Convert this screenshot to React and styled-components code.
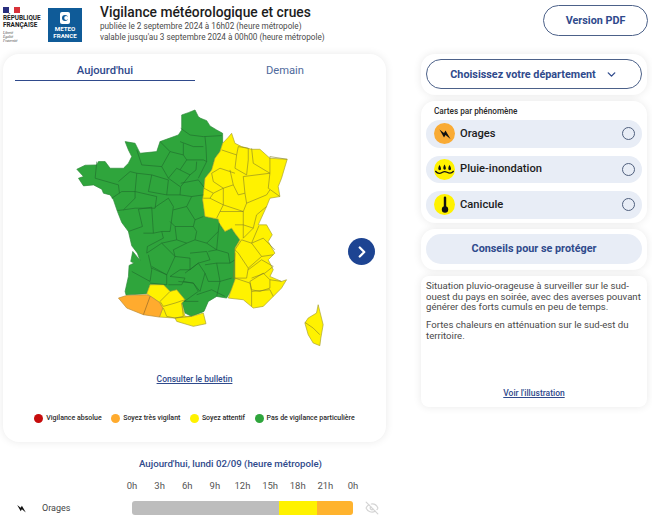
import React from 'react';
import styled, { createGlobalStyle } from 'styled-components';
import { ChevronDown, ChevronRight, EyeOff } from 'lucide-react';

const NAVY = '#2f4a8c';

const GlobalStyle = createGlobalStyle`
  html, body { margin: 0; padding: 0; background: #fff; }
  body { font-family: Roboto, "Liberation Sans", sans-serif; }
`;

const GREEN_OUTLINE = 'M365,45 L385,38 405,30 415,50 422,55 440,62 450,78 470,90 488,100 488,130 480,155 465,175 455,210 435,235 430,290 428,300 435,350 475,358 478,370 495,395 515,385 525,400 540,420 525,445 525,540 515,570 500,595 470,590 445,605 432,635 395,650 375,640 365,605 345,590 330,575 310,555 270,555 260,582 198,586 195,575 205,530 207,497 222,490 212,485 218,455 240,482 232,460 215,438 205,395 185,368 172,335 160,300 150,285 130,280 125,268 100,255 70,258 55,235 70,230 50,208 75,196 110,195 115,185 135,185 150,205 190,205 205,190 215,170 205,150 195,125 225,130 235,150 240,160 290,155 300,125 355,105 365,90 Z';
const YELLOW_OUTLINE = 'M515,100 L525,130 545,140 575,148 600,148 630,175 682,178 665,235 655,260 660,290 630,295 620,320 595,375 620,375 637,405 625,425 645,460 625,480 640,510 630,530 665,545 680,540 665,565 640,590 610,620 580,625 550,600 505,595 525,540 525,445 540,420 525,400 515,385 495,395 478,370 475,358 435,350 428,300 435,235 455,210 465,175 480,155 488,130 505,112 Z';
const SOUTH_OUTLINE = 'M260,582 L270,555 310,555 330,575 350,570 375,600 365,610 375,650 395,650 430,640 438,672 400,680 350,665 345,655 298,652 308,625 298,608 275,592 Z';
const ORANGE_OUTLINE = 'M175,595 L200,587 260,585 275,592 298,608 308,625 298,652 250,645 200,625 Z';
const CORSICA_OUTLINE = 'M775,615 L780,635 790,675 783,715 780,738 760,730 745,705 735,670 745,655 770,640 Z';

const GREEN_LINES = [
  // Nord, Picardie, Ile-de-France
  'M362,85 L390,105 430,110 485,107',
  'M435,110 L438,140 440,185',
  'M360,125 L400,140 430,140',
  'M330,155 L370,165 380,180 430,180 440,185 415,235',
  'M370,130 L370,165',
  'M300,125 L330,155 305,200',
  'M380,180 L360,210 390,225 408,210 410,185',
  'M360,210 L350,205 325,235',
  'M390,225 L362,260 360,285 395,290 430,285',
  'M362,250 L415,240 432,262',
  // Normandie
  'M230,150 L245,195 305,200 325,235',
  // Bretagne, Pays de la Loire
  'M110,185 L105,235 175,255 178,280',
  'M175,245 L210,215 230,220 225,275',
  'M155,295 L185,275 225,275 225,295 190,330 172,332',
  'M230,220 L275,225 265,275',
  'M275,225 L325,240 320,285 265,275',
  'M225,275 L290,290 285,325 225,325 190,330',
  'M235,328 L247,380 205,395',
  'M235,328 L275,322 280,400 250,400',
  'M325,235 L360,260',
  // Centre, Poitou
  'M285,322 L325,295 340,320 330,395 305,395 280,400',
  'M320,285 L360,285',
  'M395,290 L380,320 340,330',
  'M380,320 L405,360 430,350',
  'M330,365 L345,380 400,380 405,360',
  // Limousin, Auvergne
  'M305,395 L310,415 262,440 260,460',
  'M345,380 L350,420 380,430 405,420 410,395 400,380',
  'M405,420 L440,430 475,395 478,370',
  'M440,430 L470,450 475,395',
  'M350,420 L305,430',
  // Sud-ouest
  'M265,465 L275,510 270,545 215,515',
  'M260,460 L305,430 345,470 320,525 275,500',
  'M275,505 L320,525 320,555 270,550',
  'M345,470 L390,475 390,510 360,510 330,530',
  'M330,530 L375,535 365,555 325,555',
  'M345,470 L340,450 380,430',
  'M390,460 L440,455 450,480 415,490 390,510',
  'M375,520 L415,490 435,520 420,575 400,550 370,545',
  'M435,495 L470,490 480,545 445,545 435,520',
  'M445,455 L470,450 505,460 510,490 470,490',
  'M510,490 L525,480',
  'M480,545 L515,535',
  'M355,545 L400,550 415,575 380,600',
  'M410,585 L455,570 495,590',
  'M480,545 L470,590',
  'M380,600 L372,605 415,605',
];

const YELLOW_LINES = [
  'M485,150 L530,165 535,140 565,145 565,180 560,225 525,205 530,165',
  'M575,145 L580,190 630,220 630,170 682,178',
  'M630,220 L625,265 660,290',
  'M455,220 L480,205 525,220',
  'M510,210 L520,255 490,265 460,245 455,220',
  'M520,255 L535,285 555,280 550,230 630,220',
  'M555,280 L560,310 620,285 630,270',
  'M490,265 L490,315 550,335 560,310',
  'M432,265 L460,280 490,265',
  'M460,280 L450,295 430,295',
  'M450,295 L490,315 480,335 470,355',
  'M480,335 L550,335 550,375 580,385 590,345 620,320',
  'M525,375 L550,375 550,415 580,385',
  'M545,420 L575,430 597,378',
  'M575,430 L610,415 645,450',
  'M525,450 L545,420',
  'M575,430 L605,470 565,505 535,460 525,450',
  'M605,470 L640,465',
  'M525,460 L520,535 560,535 565,505',
  'M565,510 L605,480 640,500 615,520 575,535',
  'M570,545 L610,520 630,540 630,565 600,575 575,570 570,545',
  'M630,540 L665,545',
  'M525,535 L570,550 575,575 575,620',
  'M575,575 L630,570 640,590',
];

const SOUTH_LINES = [
  'M330,575 L300,605 310,620 345,610 375,600',
  'M310,625 L320,650 345,655 370,650 365,610',
  'M345,655 L395,650',
];

const Page = styled.div`
  width: 652px;
  height: 520px;
  overflow: hidden;
`;
const Header = styled.header`
  display: flex;
  align-items: flex-start;
  height: 54px;
  padding: 5px 4px 0 3px;
  box-sizing: border-box;
`;
const RepublicLogo = styled.div`
  width: 45px;
  flex: none;
  padding-top: 2px;
  color: #1c1c1c;
`;
const RepublicFlag = styled.div`
  width: 17px;
  height: 6px;
  margin-bottom: 2px;
  background: linear-gradient(90deg, #2a2f7e 0 36%, #fff 36% 64%, #d8323a 64%);
`;
const RepublicName = styled.div`
  font: 700 6.4px/7px Roboto, sans-serif;
`;
const Motto = styled.div`
  margin-top: 2px;
  font: italic 400 3.5px/4px "Liberation Serif", serif;
  color: #444;
`;
const MeteoLogo = styled.div`
  width: 34px;
  height: 34px;
  margin: 3px 18px 0 0;
  flex: none;
  background: #0f5b98;
  color: #fff;
  display: flex;
  flex-direction: column;
  align-items: center;
  padding-top: 4px;
  box-sizing: border-box;
  font: 700 6.2px/6.5px Roboto, sans-serif;
  text-align: center;
  svg { margin-bottom: 2px; }
`;
const HeaderText = styled.div`
  flex: 1;
`;
const Title = styled.h1`
  margin: 0 0 1.5px;
  font: 500 13.8px/14px Roboto, sans-serif;
  color: #1c1c1c;
`;
const SubTitle = styled.div`
  font: 400 8.2px/11px Roboto, sans-serif;
  color: #4a4a4a;
`;
const OutlineButton = styled.button`
  box-sizing: border-box;
  border: 1px solid #4c6189;
  border-radius: 16px;
  background: #fff;
  color: ${NAVY};
  font: 700 10.8px Roboto, sans-serif;
  padding: 0;
  display: flex;
  align-items: center;
  justify-content: center;
`;
const PdfButton = styled(OutlineButton)`
  width: 105px;
  height: 31px;
  flex: none;
`;
const Main = styled.main`
  display: flex;
  padding-left: 3px;
`;
const LeftColumn = styled.div`
  width: 383px;
  flex: none;
`;
const RightColumn = styled.div`
  width: 226px;
  margin-left: 35px;
  display: flex;
  flex-direction: column;
  gap: 6px;
`;
const Card = styled.section`
  background: #fff;
  border-radius: 14px;
  box-shadow: 0 0 9px rgba(0, 0, 0, 0.09);
  box-sizing: border-box;
`;
const MapCard = styled(Card)`
  height: 388px;
  display: flex;
  flex-direction: column;
  position: relative;
  border-radius: 16px;
`;
const Tabs = styled.div`
  display: grid;
  grid-template-columns: 180px 180px;
  margin: 8px 0 0 12px;
`;
const Tab = styled.div`
  height: 17px;
  padding-top: 1px;
  text-align: center;
  font: ${p => (p.$active ? 500 : 400)} 11.2px/16px Roboto, sans-serif;
  color: ${p => (p.$active ? NAVY : '#4f6a9c')};
  border-bottom: 1.5px solid ${p => (p.$active ? NAVY : 'transparent')};
`;
const MapFigure = styled.div`
  margin: 19px 0 0 57px;
  height: 253px;
  svg { display: block; }
`;
const NextButton = styled.div`
  position: absolute;
  left: 345px;
  top: 184px;
  width: 27px;
  height: 27px;
  border-radius: 50%;
  background: #1d4492;
  color: #fff;
  display: flex;
  align-items: center;
  justify-content: center;
`;
const TextLink = styled.a`
  display: block;
  text-align: center;
  font: 500 8.5px/11px Roboto, sans-serif;
  color: ${NAVY};
  text-decoration: underline;
`;
const BulletinLink = styled(TextLink)`
  margin-top: 21px;
`;
const Legend = styled.div`
  display: flex;
  justify-content: center;
  gap: 9.5px;
  margin-top: 28px;
`;
const LegendItem = styled.div`
  display: flex;
  align-items: center;
  gap: 3px;
  font: 500 7px/10px Roboto, sans-serif;
  color: #2a2a2a;
`;
const Dot = styled.span`
  width: 9px;
  height: 9px;
  border-radius: 50%;
  background: ${p => p.$color};
`;
const Timeline = styled.div`
  padding-top: 15px;
`;
const TimelineTitle = styled.div`
  text-align: center;
  padding-left: 72px;
  font: 500 9.7px/13px Roboto, sans-serif;
  color: ${NAVY};
`;
const Hours = styled.div`
  display: flex;
  justify-content: space-between;
  width: 241px;
  margin: 10px 0 0 119px;
`;
const Hour = styled.span`
  width: 20px;
  text-align: center;
  font: 400 9.5px/12px Roboto, sans-serif;
  color: #555;
`;
const PhenomenonRow = styled.div`
  display: flex;
  align-items: center;
  height: 14px;
  margin-top: 9px;
`;
const RowIcon = styled.div`
  width: 39px;
  padding-left: 13px;
  box-sizing: border-box;
  flex: none;
  display: flex;
`;
const RowLabel = styled.div`
  width: 90px;
  flex: none;
  font: 400 9px/14px Roboto, sans-serif;
  color: #444;
`;
const Bar = styled.div`
  width: 221px;
  height: 14px;
  flex: none;
  border-radius: 3px;
  overflow: hidden;
  display: flex;
  margin-right: 12px;
`;
const BarPart = styled.div`
  flex: ${p => p.$size};
  background: ${p => p.$color};
`;
const SelectCard = styled(Card)`
  height: 41px;
  padding: 5px;
`;
const SelectButton = styled(OutlineButton)`
  width: 100%;
  height: 30px;
  gap: 9px;
`;
const PhenomenaCard = styled(Card)`
  height: 122px;
  padding: 5px;
  display: flex;
  flex-direction: column;
  gap: 8px;
`;
const CardLabel = styled.div`
  font: 500 8.2px/11px Roboto, sans-serif;
  color: #2a2a2a;
  padding-left: 8px;
  margin-bottom: -5px;
`;
const Phenomenon = styled.div`
  height: 27.5px;
  flex: none;
  display: flex;
  align-items: center;
  border-radius: 14px;
  background: #e8edf6;
  padding: 0 8px;
  gap: 5px;
`;
const Badge = styled.div`
  width: 21px;
  height: 21px;
  border-radius: 50%;
  flex: none;
  background: ${p => p.$color};
  display: flex;
  align-items: center;
  justify-content: center;
`;
const PhenomenonName = styled.div`
  flex: 1;
  font: 500 11.2px/14px Roboto, sans-serif;
  color: #1c1c1c;
`;
const Radio = styled.span`
  width: 11px;
  height: 11px;
  border: 1px solid #4f5f7d;
  border-radius: 50%;
  margin-right: -1px;
`;
const AdviceCard = styled(Card)`
  height: 41px;
  padding: 5px;
`;
const AdviceButton = styled.div`
  height: 30px;
  border-radius: 15px;
  background: #e8edf6;
  color: ${NAVY};
  font: 700 10.8px/30px Roboto, sans-serif;
  text-align: center;
`;
const TextCard = styled(Card)`
  height: 131px;
  padding: 5px 5px 0;
  border-radius: 8px;
  display: flex;
  flex-direction: column;
`;
const Paragraph = styled.p`
  margin: 0 0 7.5px;
  font: 400 9.6px/10.5px Roboto, sans-serif;
  color: #4a4a4a;
`;
const IllustrationLink = styled(TextLink)`
  margin-top: auto;
  margin-bottom: 8px;
`;

function FranceMap() {
  return (
    <svg width="280" height="253" viewBox="0 0 840 760" strokeLinejoin="round" fill="none">
      <path d={GREEN_OUTLINE} fill="#2fa53c" stroke="#2c8a38" strokeWidth="2" />
      <path d={YELLOW_OUTLINE} fill="#fff200" stroke="#a7a030" strokeWidth="2" />
      <path d={SOUTH_OUTLINE} fill="#fff200" stroke="#a7a030" strokeWidth="2" />
      <path d={ORANGE_OUTLINE} fill="#ffab2e" stroke="#b98a30" strokeWidth="2" />
      <path d={CORSICA_OUTLINE} fill="#fff200" stroke="#a7a030" strokeWidth="2" />
      <path d={GREEN_LINES.join(' ')} stroke="#1f6a2b" strokeWidth="1.8" />
      <path d={YELLOW_LINES.join(' ')} stroke="#85802a" strokeWidth="1.8" />
      <path d={SOUTH_LINES.join(' ')} stroke="#85802a" strokeWidth="1.8" />
      <path d="M270,590 L250,645" stroke="#85602a" strokeWidth="1.8" />
      <path d="M735,668 L760,685 780,705" stroke="#85802a" strokeWidth="1.8" />
    </svg>
  );
}

function BoltIcon({ size = 14 }) {
  return (
    <svg width={size} height={size} viewBox="0 0 14 14">
      <path d="M1.5 2.5 L6 6 L7.5 3.5 L12.5 12 L7.5 8 L6 10.5 Z" fill="#111" />
    </svg>
  );
}

function FloodIcon() {
  return (
    <svg width="19" height="19" viewBox="0 0 19 19" fill="none">
      <path d="M4.5 5 C2.8 8 3 10.2 4.8 10.2 C6.6 10.2 6.4 8 4.5 5 Z M9.5 4.5 C7.8 7.5 8 9.7 9.8 9.7 C11.4 9.7 11.2 7.5 9.5 4.5 Z M14.5 5 C12.8 8 13 10.2 14.8 10.2 C16.6 10.2 16.4 8 14.5 5 Z" fill="#111" />
      <path d="M0.3 11 C2.5 14 5.5 13.5 7.5 12.2 C9 11.2 10.5 11.4 12 12.2 C14 13.4 16.5 13.8 18.7 11" stroke="#111" strokeWidth="1.3" />
    </svg>
  );
}

function ThermometerIcon() {
  return (
    <svg width="12" height="18" viewBox="0 0 12 18">
      <rect x="4.8" y="0.5" width="2.4" height="12" rx="1.2" fill="#111" />
      <circle cx="6" cy="13.5" r="3.2" fill="#111" />
    </svg>
  );
}

const LEGEND = [
  ['#c60c0c', 'Vigilance absolue'],
  ['#ffab2e', 'Soyez très vigilant'],
  ['#fff200', 'Soyez attentif'],
  ['#2fa53c', 'Pas de vigilance particulière'],
];

const HOURS = ['0h', '3h', '6h', '9h', '12h', '15h', '18h', '21h', '0h'];

const PHENOMENA = [
  { name: 'Orages', color: '#f9ab35', icon: <BoltIcon /> },
  { name: 'Pluie-inondation', color: '#fff200', icon: <FloodIcon /> },
  { name: 'Canicule', color: '#fff200', icon: <ThermometerIcon /> },
];

export default function App() {
  return (
    <Page>
      <GlobalStyle />
      <Header>
        <RepublicLogo>
          <RepublicFlag />
          <RepublicName>RÉPUBLIQUE<br />FRANÇAISE</RepublicName>
          <Motto>Liberté<br />Égalité<br />Fraternité</Motto>
        </RepublicLogo>
        <MeteoLogo>
          <svg width="10" height="12" viewBox="0 0 10 12">
            <rect width="10" height="12" rx="2" fill="#fff" />
            <circle cx="5" cy="6" r="3" fill="#0f5b98" />
            <circle cx="6.2" cy="6" r="2" fill="#fff" />
          </svg>
          METEO<br />FRANCE
        </MeteoLogo>
        <HeaderText>
          <Title>Vigilance météorologique et crues</Title>
          <SubTitle>publiée le 2 septembre 2024 à 16h02 (heure métropole)</SubTitle>
          <SubTitle>valable jusqu'au 3 septembre 2024 à 00h00 (heure métropole)</SubTitle>
        </HeaderText>
        <PdfButton>Version PDF</PdfButton>
      </Header>
      <Main>
        <LeftColumn>
          <MapCard>
            <Tabs>
              <Tab $active>Aujourd'hui</Tab>
              <Tab>Demain</Tab>
            </Tabs>
            <MapFigure><FranceMap /></MapFigure>
            <NextButton><ChevronRight size={18} strokeWidth={3} /></NextButton>
            <BulletinLink>Consulter le bulletin</BulletinLink>
            <Legend>
              {LEGEND.map(([color, label]) => (
                <LegendItem key={label}><Dot $color={color} />{label}</LegendItem>
              ))}
            </Legend>
          </MapCard>
          <Timeline>
            <TimelineTitle>Aujourd'hui, lundi 02/09 (heure métropole)</TimelineTitle>
            <Hours>
              {HOURS.map((hour, i) => <Hour key={i}>{hour}</Hour>)}
            </Hours>
            <PhenomenonRow>
              <RowIcon><BoltIcon size={11} /></RowIcon>
              <RowLabel>Orages</RowLabel>
              <Bar>
                <BarPart $size={147} $color="#bdbdbd" />
                <BarPart $size={38} $color="#fff200" />
                <BarPart $size={36} $color="#ffb32e" />
              </Bar>
              <EyeOff size={14} color="#d4d4d4" />
            </PhenomenonRow>
          </Timeline>
        </LeftColumn>
        <RightColumn>
          <SelectCard>
            <SelectButton>Choisissez votre département <ChevronDown size={13} strokeWidth={2.5} /></SelectButton>
          </SelectCard>
          <PhenomenaCard>
            <CardLabel>Cartes par phénomène</CardLabel>
            {PHENOMENA.map(item => (
              <Phenomenon key={item.name}>
                <Badge $color={item.color}>{item.icon}</Badge>
                <PhenomenonName>{item.name}</PhenomenonName>
                <Radio />
              </Phenomenon>
            ))}
          </PhenomenaCard>
          <AdviceCard>
            <AdviceButton>Conseils pour se protéger</AdviceButton>
          </AdviceCard>
          <TextCard>
            <Paragraph>Situation pluvio-orageuse à surveiller sur le sud-ouest du pays en soirée, avec des averses pouvant générer des forts cumuls en peu de temps.</Paragraph>
            <Paragraph>Fortes chaleurs en atténuation sur le sud-est du territoire.</Paragraph>
            <IllustrationLink>Voir l'illustration</IllustrationLink>
          </TextCard>
        </RightColumn>
      </Main>
    </Page>
  );
}
